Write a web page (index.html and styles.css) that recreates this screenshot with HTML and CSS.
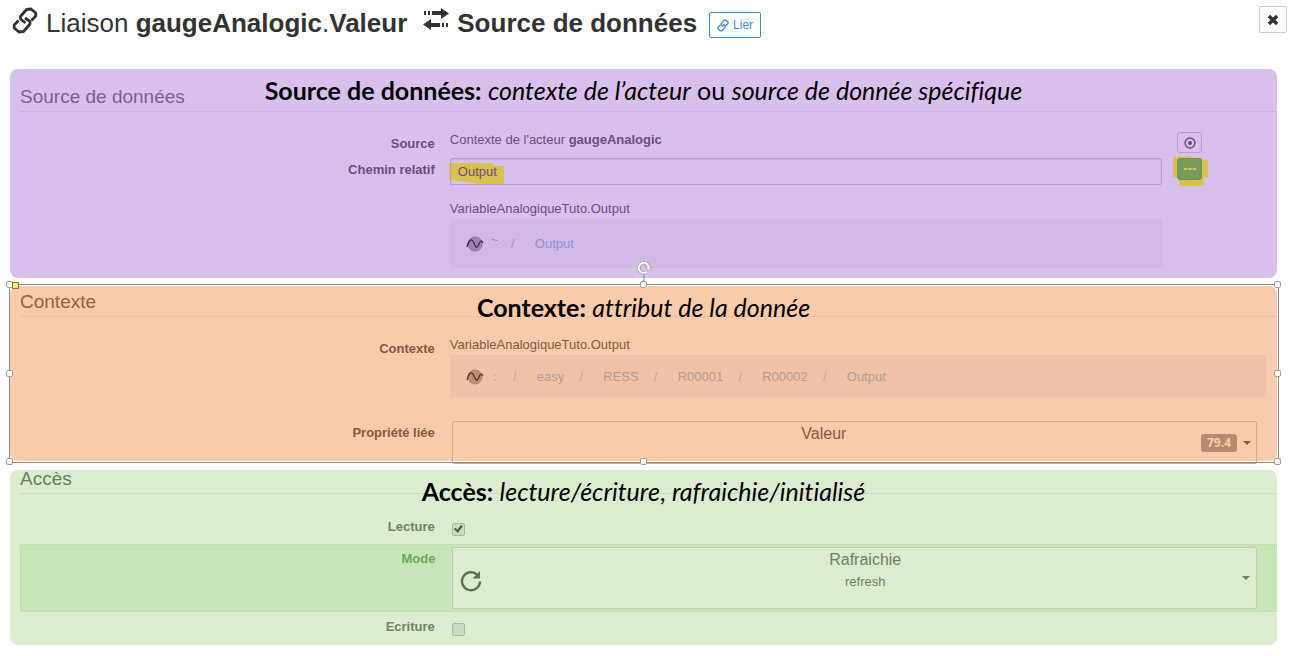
FILE: index.html
```html
<!DOCTYPE html>
<html lang="fr">
<head>
<meta charset="utf-8">
<title>Liaison gaugeAnalogic.Valeur</title>
<link rel="stylesheet" href="styles.css">
</head>
<body>
<header class="topbar">
  <h1 class="title">
    <svg class="title-icon" viewBox="0 0 26 27" aria-hidden="true"><g fill="none" stroke="currentColor" stroke-width="2.800" stroke-linejoin="round"><path d="M13.500 16 8.500 12 8.500 9.500 14.500 2.500 19 2 23.800 6 23.800 9 19.500 13.500"/><path d="M13 11 18 14.500 18 17 11.500 24.500 7 25 2.200 21 2.200 18 6.500 13.500"/></g></svg>
    <span>Liaison <b>gaugeAnalogic</b>.<b>Valeur</b></span>
    <svg class="swap-icon" viewBox="0 0 26 22" aria-hidden="true"><path fill="currentColor" d="M1 3h2v4H1zM5 3h2v4H5zM9 3h9V0l8 5.500-8 5.500V7H9zM25 15h-2v4h2zM21 15h-2v4h2zM17 15H8v-4l-8 5.500 8 5.500v-3h9z"/></svg>
    <b>Source de données</b>
  </h1>
  <button class="link-button" type="button"><svg viewBox="0 0 26 27" aria-hidden="true"><g fill="none" stroke="currentColor" stroke-width="3"><path d="M13.500 16 8.500 12 8.500 9.500 14.500 2.500 19 2 23.800 6 23.800 9 19.500 13.500"/><path d="M13 11 18 14.500 18 17 11.500 24.500 7 25 2.200 21 2.200 18 6.500 13.500"/></g></svg>Lier</button>
  <button class="close-button" type="button" aria-label="Fermer"><svg viewBox="0 0 12 12" aria-hidden="true"><path d="M2.500 2.500 9.500 9.500M9.500 2.500 2.500 9.500" stroke="currentColor" stroke-width="3"/></svg></button>
</header>

<main class="panels">
  <section class="panel panel-source">
    <h2>Source de données</h2>
    <p class="note"><b>Source de données:</b> <i>contexte de l’acteur</i> ou <i>source de donnée spécifique</i></p>
    <div class="row row-source">
      <span class="label">Source</span>
      <span class="value">Contexte de l'acteur <b>gaugeAnalogic</b></span>
      <button class="tool" type="button" aria-label="Cibler"><svg viewBox="0 0 12 12" aria-hidden="true"><circle cx="6" cy="6" r="4.900" fill="none" stroke="currentColor" stroke-width="1.500"/><circle cx="6" cy="6" r="2" fill="currentColor"/></svg></button>
    </div>
    <div class="row row-path">
      <label class="label" for="path">Chemin relatif</label>
      <div class="field">
        <span class="marker marker-path"></span>
        <input class="path" id="path" type="text" value="Output">
      </div>
      <div class="field">
        <span class="marker marker-tool"></span>
        <button class="tool tool-green" type="button" aria-label="Parcourir"><svg viewBox="0 0 12 2" aria-hidden="true"><path d="M0 0h3.400v2H0zM4.300 0h3.400v2H4.300zM8.600 0H12v2H8.600z" fill="currentColor"/></svg></button>
      </div>
    </div>
    <div class="row row-result">
      <div class="result">
        <span class="value">VariableAnalogiqueTuto.Output</span>
        <nav class="crumbs crumbs-tall">
          <svg class="wave" viewBox="0 0 18 16" aria-hidden="true"><circle cx="9" cy="8" r="7"/><path d="M1 11C3 3 6 2 8 7S11 13 13 8 16 5 17 7"/></svg>
          <a href="#" class="root">~</a><span class="slash">/</span><a href="#">Output</a>
        </nav>
      </div>
    </div>
  </section>

  <section class="panel panel-context">
    <h2>Contexte</h2>
    <p class="note"><b>Contexte:</b> <i>attribut de la donnée</i></p>
    <div class="row row-context">
      <span class="label">Contexte</span>
      <div class="context">
        <span class="value">VariableAnalogiqueTuto.Output</span>
        <nav class="crumbs">
          <svg class="wave" viewBox="0 0 18 16" aria-hidden="true"><circle cx="9" cy="8" r="7"/><path d="M1 11C3 3 6 2 8 7S11 13 13 8 16 5 17 7"/></svg>
          <a href="#" class="root">:</a><span class="slash">/</span><a href="#">easy</a><span class="slash">/</span><a href="#">RESS</a><span class="slash">/</span><a href="#">R00001</a><span class="slash">/</span><a href="#">R00002</a><span class="slash">/</span><a href="#">Output</a>
        </nav>
      </div>
    </div>
    <div class="row row-choice row-property">
      <label class="label" for="property">Propriété liée</label>
      <button class="choice choice-property" id="property" type="button" aria-haspopup="listbox">
        <span class="choice-text">Valeur</span>
        <span class="badge">79.4</span>
        <span class="caret"></span>
      </button>
    </div>
    <div class="selection" aria-hidden="true">
      <i class="handle n w"></i><i class="handle n c"></i><i class="handle n e"></i>
      <i class="handle m w"></i><i class="handle m e"></i>
      <i class="handle s w"></i><i class="handle s c"></i><i class="handle s e"></i>
      <i class="handle-adjust"></i>
      <svg class="rotate" viewBox="0 0 16 22"><path d="M8 13v9" stroke="#8c8c8c"/><g fill="none"><path d="M10.500 12A5 5 0 1 1 12.500 6" stroke="#a3a3a3" stroke-width="3.400"/><path d="M9 7h6.500L12.500 10.500z" fill="#fff" stroke="#a3a3a3"/><path d="M10.500 12A5 5 0 1 1 12.700 7.500" stroke="#fff" stroke-width="2"/></g></svg>
    </div>
  </section>

  <section class="panel panel-access">
    <h2>Accès</h2>
    <p class="note"><b>Accès:</b> <i>lecture/écriture</i>, <i>rafraichie/initialisé</i></p>
    <div class="row row-choice row-read">
      <label class="label" for="read">Lecture</label>
      <input class="check" id="read" type="checkbox" checked>
    </div>
    <div class="row row-choice row-mode">
      <label class="label" for="mode">Mode</label>
      <button class="choice choice-mode" id="mode" type="button" aria-haspopup="listbox">
        <svg class="refresh" viewBox="0 0 22 22" aria-hidden="true"><path d="M17.500 5A9 9 0 1 0 20 11.500" fill="none" stroke="currentColor" stroke-width="2.400"/><path d="M20 1v7.500h-7.500z" fill="currentColor"/></svg>
        <span class="choice-text">Rafraichie<small>refresh</small></span>
        <span class="caret"></span>
      </button>
    </div>
    <div class="row row-choice row-write">
      <label class="label" for="write">Ecriture</label>
      <input class="check" id="write" type="checkbox">
    </div>
  </section>
</main>
</body>
</html>
```
FILE: styles.css
```css
* { box-sizing: border-box; }

body {
  margin: 0;
  background: #fff;
  color: #333;
  font: 13px/16px "Liberation Sans", Arial, sans-serif;
}

button, input { font: inherit; color: inherit; }
button { padding: 0; background: transparent; cursor: pointer; }
a { color: inherit; text-decoration: none; }
svg { display: block; }

/* Title bar */
.topbar {
  display: flex;
  align-items: flex-start;
  padding: 6px 4px 0 12px;
  height: 69px;
}
.title {
  display: flex;
  align-items: center;
  gap: 8px;
  margin: 0;
  font-size: 26px;
  line-height: 34px;
  font-weight: 400;
  white-space: nowrap;
}
.title-icon { width: 26px; height: 27px; margin-top: -6px; }
.swap-icon { width: 26px; height: 22px; margin: -8px 0 0 8px; }
.link-button {
  display: flex;
  align-items: center;
  justify-content: center;
  gap: 4px;
  width: 52px;
  height: 26px;
  margin: 6px 0 0 12px;
  border: 1px solid #428bca;
  border-radius: 2px;
  color: #428bca;
  font-size: 12px;
}
.link-button svg { width: 12px; height: 13px; }
.close-button {
  display: grid;
  place-items: center;
  width: 28px;
  height: 27px;
  margin-left: auto;
  border: 1px solid #ccc;
  border-radius: 2px;
}
.close-button svg { width: 14px; height: 14px; }

/* Panels */
.panels { margin: 0 14px 11px 10px; }
.panel {
  display: flow-root;
  position: relative;
  padding-left: 10px;
  border-radius: 8px;
}
.panel h2 {
  margin: 0;
  padding-bottom: 5px;
  border-bottom: 1px solid var(--line);
  font-size: 19px;
  line-height: 18px;
  font-weight: 400;
  color: var(--heading);
}
.panel-source {
  --line: #cbb2dd;
  --heading: #7e5c98;
  padding-top: 19px;
  padding-bottom: 10px;
  background: #d9c0ec;
  color: #6a4d82;
}
.panel-context {
  --line: #eabd9f;
  --heading: #93623f;
  margin-top: 8px;
  padding-top: 7px;
  background: #f8cbad;
  color: #875a3c;
}
.panel-access {
  --line: #c9dcbf;
  --heading: #697e5e;
  margin-top: 9px;
  padding-bottom: 9px;
  background: #dcecd1;
  color: #6e8263;
}

/* Annotation laid over each panel */
.note {
  position: absolute;
  left: 0;
  right: 0;
  top: 7px;
  margin: 0;
  color: #000;
  font: 25px/28px Lato, Carlito, Calibri, sans-serif;
  font-variant-ligatures: none;
  text-align: center;
  white-space: nowrap;
  pointer-events: none;
}

/* Form rows */
.row { display: grid; grid-template-columns: 33% 1fr 100px; column-gap: 15px; align-items: start; }
.label { padding-top: 4px; font-weight: 700; text-align: right; }
.value { display: block; }
.row-source { margin-top: 20px; }
.row-path { margin-top: 5px; }
.row-result { margin-top: 16px; }
.result { grid-column: 2; }
.row-context { grid-template-columns: 33% 1fr; margin-top: 20px; }
.context { margin-right: 11px; }
.row-choice { grid-template-columns: 33% 1fr 3px; column-gap: 17px; }

.field { position: relative; }
.path {
  display: block;
  position: relative;
  width: 100%;
  height: 27px;
  padding: 0 7px;
  border: 1px solid #b79bcb;
  border-radius: 2px;
  background: transparent;
  box-shadow: inset 0 1px 1px #cbb1de;
}
.marker { position: absolute; background: #d9c14f; }
.marker-path {
  left: -1px;
  top: 5px;
  width: 55px;
  height: 21px;
  clip-path: polygon(0 0, 80% 0, 80% 14%, 100% 14%, 100% 100%, 55% 100%, 0 80%);
}
.marker-tool {
  left: -4px;
  top: -2px;
  width: 35px;
  height: 30px;
  clip-path: polygon(0 3%, 50% 0, 50% 6%, 85% 6%, 85% 14%, 100% 14%, 100% 72%, 88% 72%, 88% 100%, 18% 100%, 18% 76%, 0 68%);
}
.tool {
  display: grid;
  place-items: center;
  position: relative;
  width: 25px;
  height: 21px;
  border: 1px solid #b79bcb;
  border-radius: 3px;
}
.tool svg { width: 12px; }
.tool-green { height: 22px; border-color: #6b9450; background: #769b54; color: #dcc250; }

.crumbs {
  display: flex;
  align-items: center;
  height: 43px;
  margin-top: 2px;
  padding-left: 16px;
  border-radius: 2px;
  background: #f1c3a6;
  color: #b59b90;
}
.crumbs-tall { height: 49px; background: #d2b8e4; color: #8a8fda; }
.wave { width: 18px; height: 16px; margin-right: 9px; }
.wave circle { fill: #c0906f; stroke: #b18467; }
.wave path { fill: none; stroke: #4f2c1c; stroke-width: 1.2; }
.crumbs-tall .wave { margin-right: 7px; }
.crumbs-tall .wave circle { fill: #a283b8; stroke: #8c6fa2; }
.crumbs-tall .wave path { stroke: #3c2352; }
.root { width: 5px; }
.crumbs-tall .root { padding-bottom: 8px; }
.slash { width: 39px; padding-right: 5px; text-align: center; opacity: .7; }
.crumbs-tall .slash { color: #ab90bd; opacity: 1; }

/* Drop-down buttons */
.choice {
  display: grid;
  align-items: center;
  width: 100%;
  border: 1px solid;
  border-radius: 2px;
}
.choice-text { align-self: start; padding-top: 2px; font-size: 16px; line-height: 20px; }
.choice-text small { display: block; font-size: 13px; line-height: 24px; }
.choice-property {
  grid-template-columns: 1fr 36px 8px;
  column-gap: 6px;
  height: 43px;
  padding: 0 5px 0 0;
  border-color: #d9aa8c;
}
.row-property { margin-top: 23px; margin-bottom: -3px; }
.choice-mode {
  grid-template-columns: 28px 1fr 8px;
  height: 62px;
  padding: 0 6px 0 7px;
  border-color: #b9ceb0;
  background: #dcecd1;
}
.refresh { width: 22px; height: 22px; margin-top: 6px; color: #5c7150; }
.caret { border: 4px solid transparent; border-top-color: currentColor; border-bottom: 0; }
.badge {
  height: 18px;
  border-radius: 3px;
  background: #b98b6e;
  color: #f8cbad;
  font: 700 12px/18px "Open Sans", sans-serif;
}

/* Access rows */
.row-read { margin-top: 25px; }
.row-read .label, .row-write .label { padding: 0; }
.row-mode {
  margin-top: 8px;
  padding: 2px 0;
  border: 1px solid #c1dfae;
  border-right: 0;
  border-radius: 2px 0 0 2px;
  background: #c8e4b9;
}
.row-mode .label { color: #6aa85f; }
.choice-mode { color: #6e8263; }
.row-write { margin-top: 7px; }
.check {
  appearance: none;
  width: 13px;
  height: 13px;
  margin: 4px 0 0;
  border: 1px solid #a9bb9f;
  border-radius: 2px;
  background: #ccdcc2;
}
.check:checked::after {
  content: "";
  display: block;
  width: 9px;
  height: 8px;
  margin: 1px;
  background: #4e6044;
  clip-path: polygon(0 50%, 20% 35%, 40% 58%, 78% 0, 100% 15%, 45% 100%);
}

/* Selection frame around the context panel */
.selection {
  position: absolute;
  inset: -2px -2px -2px -1px;
  border: 1px solid #8c8c8c;
  pointer-events: none;
}
.handle {
  position: absolute;
  width: 7px;
  height: 7px;
  margin: -4px;
  border: 1px solid #a0a0a0;
  border-radius: 2px;
  background: #fff;
}
.n { top: 0; }
.m { top: 50%; }
.s { top: 100%; }
.w { left: 0; }
.c { left: 50%; }
.e { left: 100%; }
.handle-adjust {
  position: absolute;
  left: 2px;
  top: -3px;
  width: 7px;
  height: 7px;
  border: 1px solid #7d7750;
  background: #ffe56e;
}
.rotate {
  position: absolute;
  left: 50%;
  top: -25px;
  width: 16px;
  height: 22px;
  margin-left: -8px;
}
```
